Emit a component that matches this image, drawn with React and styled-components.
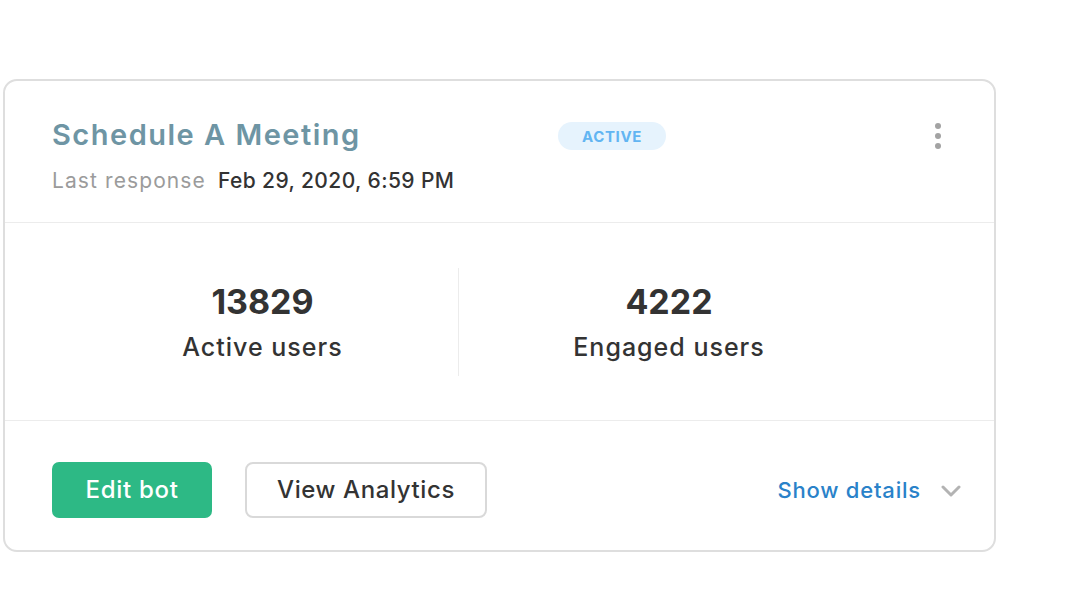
import React from "react";
import styled, { createGlobalStyle } from "styled-components";

const Global = createGlobalStyle`
  html, body { margin: 0; padding: 0; background: #ffffff; }
  body { font-family: "Inter", "Open Sans", "Liberation Sans", sans-serif; }
  * { box-sizing: border-box; }
`;

const Page = styled.div`
  width: 1080px;
  height: 614px;
  padding: 79px 0 0 3px;
`;

const Card = styled.div`
  width: 993px;
  height: 473px;
  border: 2px solid #dedede;
  border-radius: 14px;
  display: flex;
  flex-direction: column;
  background: #fff;
`;

const Header = styled.div`
  height: 142px;
  flex: none;
  display: flex;
  align-items: flex-start;
  padding: 37px 52px 0 47px;
  border-bottom: 1px solid #ececec;
`;

const TitleBlock = styled.div`
  width: 506px;
  display: flex;
  flex-direction: column;
  gap: 17px;
`;

const Title = styled.div`
  font-size: 29px;
  line-height: 34px;
  font-weight: 600;
  color: #6e95a4;
  letter-spacing: 1.5px;
`;

const Meta = styled.div`
  font-size: 21px;
  line-height: 24px;
  display: flex;
  gap: 12px;
`;

const MetaLabel = styled.span`
  color: #9b9b9b;
  letter-spacing: 1.1px;
`;

const MetaValue = styled.span`
  color: #333333;
  font-weight: 500;
  letter-spacing: 0.4px;
`;

const Badge = styled.div`
  margin-top: 4px;
  width: 108px;
  height: 28px;
  border-radius: 14px;
  background: #e6f3fd;
  color: #62b5f2;
  font-size: 15px;
  font-weight: 700;
  display: flex;
  align-items: center;
  justify-content: center;
  letter-spacing: 0.6px;
`;

const MenuButton = styled.button`
  margin-left: auto;
  margin-top: 5px;
  border: 0;
  background: transparent;
  padding: 0;
  width: 8px;
  display: flex;
  flex-direction: column;
  align-items: center;
  gap: 4px;
  cursor: pointer;
`;

const Dot = styled.span`
  width: 6px;
  height: 6px;
  border-radius: 50%;
  background: #a3a3a3;
`;

const Stats = styled.div`
  height: 198px;
  flex: none;
  display: flex;
  align-items: center;
  padding-left: 62px;
  border-bottom: 1px solid #ececec;
`;

const Stat = styled.div`
  width: ${(p) => p.$w}px;
  height: 108px;
  display: flex;
  flex-direction: column;
  align-items: center;
  justify-content: center;
  gap: 12px;
  border-right: ${(p) => (p.$divider ? "1px solid #ececec" : "none")};
`;

const StatValue = styled.div`
  font-size: 34px;
  line-height: 38px;
  font-weight: 700;
  color: #333333;
`;

const StatLabel = styled.div`
  font-size: 25px;
  line-height: 28px;
  font-weight: 500;
  color: #333333;
  letter-spacing: 1px;
`;

const Footer = styled.div`
  flex: 1;
  display: flex;
  align-items: center;
  padding: 8px 33px 0 47px;
`;

const PrimaryButton = styled.button`
  width: 160px;
  height: 56px;
  border: 0;
  border-radius: 7px;
  background: #2db985;
  color: #ffffff;
  font-family: inherit;
  font-size: 24px;
  font-weight: 500;
  letter-spacing: 0.7px;
  cursor: pointer;
`;

const OutlineButton = styled.button`
  margin-left: 33px;
  width: 242px;
  height: 56px;
  border: 2px solid #d9d9d9;
  border-radius: 8px;
  background: #ffffff;
  color: #333333;
  font-family: inherit;
  font-size: 24px;
  font-weight: 500;
  letter-spacing: 0.6px;
  cursor: pointer;
`;

const DetailsToggle = styled.button`
  margin-left: auto;
  display: flex;
  align-items: center;
  gap: 20px;
  border: 0;
  background: transparent;
  padding: 0;
  color: #2a82c9;
  font-family: inherit;
  font-size: 22px;
  font-weight: 500;
  letter-spacing: 0.8px;
  cursor: pointer;
`;

const Chevron = () => (
  <svg width="20" height="12" viewBox="0 0 20 12" fill="none" style={{ marginTop: 2 }}>
    <path d="M2 2 L10 10 L18 2" stroke="#b3b3b3" strokeWidth="3" strokeLinecap="round" strokeLinejoin="round" />
  </svg>
);

export default function App() {
  return (
    <Page>
      <Global />
      <Card>
        <Header>
          <TitleBlock>
            <Title>Schedule A Meeting</Title>
            <Meta>
              <MetaLabel>Last response</MetaLabel>
              <MetaValue>Feb 29, 2020, 6:59 PM</MetaValue>
            </Meta>
          </TitleBlock>
          <Badge>ACTIVE</Badge>
          <MenuButton aria-label="More">
            <Dot />
            <Dot />
            <Dot />
          </MenuButton>
        </Header>
        <Stats>
          <Stat $w={392} $divider>
            <StatValue>13829</StatValue>
            <StatLabel>Active users</StatLabel>
          </Stat>
          <Stat $w={420}>
            <StatValue>4222</StatValue>
            <StatLabel>Engaged users</StatLabel>
          </Stat>
        </Stats>
        <Footer>
          <PrimaryButton>Edit bot</PrimaryButton>
          <OutlineButton>View Analytics</OutlineButton>
          <DetailsToggle>
            Show details
            <Chevron />
          </DetailsToggle>
        </Footer>
      </Card>
    </Page>
  );
}
